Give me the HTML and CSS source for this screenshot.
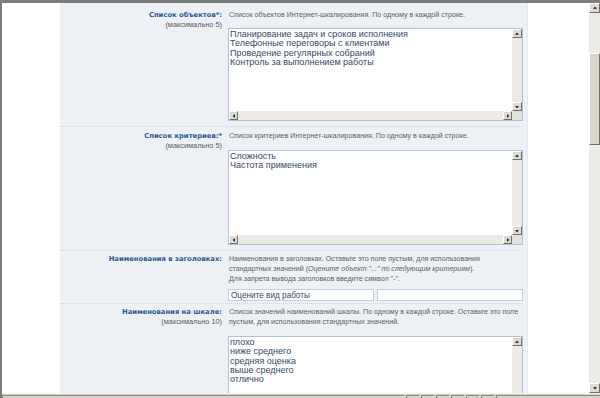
FILE: index.html
```html
<!DOCTYPE html>
<html lang="ru">

<head>
    <meta charset="UTF-8">
    <meta name="viewport" content="width=device-width, initial-scale=1.0">
    <title>Настройки шкалирования</title>
    <link rel="stylesheet" href="styles.css">
</head>

<body>
    <div class="window">
        <div class="viewport">
            <div class="page">
                <div class="gutter"></div>

                <form class="panel">
                    <div class="row">
                        <div class="label">
                            <b>Список объектов*:</b>
                            <span class="note">(максимально 5)</span>
                        </div>
                        <div class="field">
                            <p class="hint">Список объектов Интернет-шкалирования. По одному в каждой строке.</p>
                            <div class="box box-1">
                                <textarea>Планирование задач и сроков исполнения
Телефонные переговоры с клиентами
Проведение регулярных собраний
Контроль за выполнением работы</textarea>
                                <div class="vbar"><span class="btn up"></span><span class="track"></span><span class="btn down"></span></div>
                                <div class="hbar"><span class="btn left"></span><span class="track"></span><span class="btn right"></span></div>
                                <div class="corner"></div>
                            </div>
                        </div>
                    </div>

                    <div class="row">
                        <div class="label">
                            <b>Список критериев:*</b>
                            <span class="note">(максимально 5)</span>
                        </div>
                        <div class="field">
                            <p class="hint">Список критериев Интернет-шкалирования. По одному в каждой строке.</p>
                            <div class="box box-2">
                                <textarea>Сложность
Частота применения</textarea>
                                <div class="vbar"><span class="btn up"></span><span class="track"></span><span class="btn down"></span></div>
                                <div class="hbar"><span class="btn left"></span><span class="track"></span><span class="btn right"></span></div>
                                <div class="corner"></div>
                            </div>
                        </div>
                    </div>

                    <div class="row compact">
                        <div class="label">
                            <b>Наименования в заголовках:</b>
                        </div>
                        <div class="field">
                            <p class="hint hint-tight">Наименования в заголовках. Оставьте это поле пустым, для использования<br>
                                стандартных значений (<i>Оцените объект "..." по следующим критериям</i>).<br>
                                Для запрета вывода заголовков введите символ "-".</p>
                            <div class="inputs">
                                <input type="text" value="Оцените вид работы">
                                <input type="text" value="">
                            </div>
                        </div>
                    </div>

                    <div class="row compact last">
                        <div class="label">
                            <b>Наименования на шкале:</b>
                            <span class="note">(максимально 10)</span>
                        </div>
                        <div class="field">
                            <p class="hint">Список значений наименований шкалы. По одному в каждой строке. Оставьте это поле пустым, для использования стандартных значений.</p>
                            <div class="box box-3">
                                <textarea>плохо
ниже среднего
средняя оценка
выше среднего
отлично</textarea>
                                <div class="vbar"><span class="btn up"></span><span class="track"></span><span class="btn down"></span></div>
                            </div>
                        </div>
                    </div>
                </form>

                <div class="aside"></div>
            </div>

            <div class="scrollbar">
                <span class="btn up"></span>
                <span class="track"><span class="thumb"></span></span>
                <span class="btn down"></span>
            </div>
        </div>

        <div class="statusbar">
            <span class="pane wide"></span>
            <span class="pane"></span>
            <span class="pane"></span>
            <span class="pane"></span>
            <span class="pane"></span>
            <span class="pane"></span>
            <span class="pane"></span>
            <span class="pane rest"></span>
        </div>
    </div>
</body>

</html>
```

FILE: styles.css
```css
* {
    box-sizing: border-box;
}

body {
    margin: 0;
    font-family: "Liberation Sans", Arial, sans-serif;
    background-color: #fff;
}

.window {
    width: 600px;
    height: 398px;
    display: flex;
    flex-direction: column;
    border-top: 3px solid #7d7d7d;
    border-left: 2px solid #7d7d7d;
    overflow: hidden;
}

.viewport {
    flex: 1;
    display: flex;
    min-height: 0;
}

.page {
    flex: 1;
    display: flex;
    overflow: hidden;
}

.gutter {
    width: 58px;
    flex: none;
}

.aside {
    flex: 1;
}

/* form panel */
.panel {
    width: 468px;
    flex: none;
    margin: 0;
    padding: 3px 5px 0 0;
    background-color: #edf0f5;
    border-right: 1px solid #e3e9f4;
}

.row {
    display: grid;
    grid-template-columns: 162px 295px;
    column-gap: 6px;
    padding: 4px 0 5px;
    border-bottom: 1px dotted #cfd6e2;
}

.row.compact {
    padding: 3px 0 2px;
}

.row.last {
    border-bottom: none;
}

.label {
    display: flex;
    flex-direction: column;
    align-items: flex-end;
    text-align: right;
    font-size: 7.35px;
    line-height: 10px;
}

.label b {
    color: #2b5a92;
    font-family: "DejaVu Sans", Verdana, sans-serif;
    font-size: 6.8px;
}

.note {
    color: #5c5c5c;
}

.field {
    min-width: 0;
}

.hint {
    margin: 0 0 8px 1px;
    font-size: 7.1px;
    line-height: 10px;
    color: #616161;
}

.row + .row .hint {
    margin-bottom: 9px;
}

.row.compact .hint-tight {
    margin-bottom: 5px;
}

/* textarea with classic scrollbars */
.box {
    display: grid;
    grid-template-columns: 1fr 10px;
    grid-template-rows: 1fr 9px;
    border: 1px solid #b4c0d4;
    background-color: #fff;
}

.box-1 {
    height: 93px;
}

.box-2 {
    height: 95px;
}

.box-3 {
    height: 70px;
    grid-template-rows: 1fr;
    border-bottom: none;
}

.box textarea {
    border: none;
    padding: 1px 1px;
    resize: none;
    overflow: hidden;
    font-family: "Liberation Sans", Arial, sans-serif;
    font-size: 9px;
    line-height: 9.3px;
    color: #374766;
    outline: none;
}

.vbar,
.hbar {
    display: flex;
    background-color: #eceae4;
}

.vbar {
    flex-direction: column;
}

.track {
    flex: 1;
}

.corner {
    background-color: #e4e1da;
}

.btn {
    position: relative;
    flex: none;
    width: 9px;
    height: 9px;
    background-color: #dedad2;
    border-top: 1px solid #fff;
    border-left: 1px solid #fff;
    border-right: 1px solid #6f6f6f;
    border-bottom: 1px solid #6f6f6f;
}

.vbar .btn {
    width: 10px;
}

.btn::before {
    content: "";
    position: absolute;
    left: 50%;
    top: 50%;
    width: 0;
    height: 0;
    border: 2px solid transparent;
}

.btn.up::before {
    border-bottom: 2px solid #111;
    border-top: none;
    transform: translate(-50%, -60%);
}

.btn.down::before {
    border-top: 2px solid #111;
    border-bottom: none;
    transform: translate(-50%, -40%);
}

.btn.left::before {
    border-right: 2px solid #111;
    border-left: none;
    transform: translate(-60%, -50%);
}

.btn.right::before {
    border-left: 2px solid #111;
    border-right: none;
    transform: translate(-40%, -50%);
}

.inputs {
    display: flex;
    gap: 3px;
}

.inputs input {
    flex: 1;
    min-width: 0;
    height: 12px;
    padding: 0 2px;
    border: 1px solid #c5cfdf;
    font-family: "Liberation Sans", Arial, sans-serif;
    font-size: 8.2px;
    color: #374766;
}

/* window scrollbar */
.scrollbar {
    width: 11px;
    flex: none;
    display: flex;
    flex-direction: column;
    background-color: #edebe5;
}

.scrollbar .btn {
    width: 11px;
    height: 10px;
}

.scrollbar .track {
    display: flex;
    flex-direction: column;
}

.thumb {
    margin-top: 40px;
    height: 92px;
    background-color: #d9d3c9;
    border-top: 1px solid #fff;
    border-left: 1px solid #fff;
    border-right: 1px solid #6f6f6f;
    border-bottom: 1px solid #6f6f6f;
}

/* status bar */
.statusbar {
    height: 5px;
    flex: none;
    display: flex;
    gap: 2px;
    padding-top: 1px;
    background-color: #d6d3cb;
    border-top: 1px solid #f4f3ef;
}

.pane {
    width: 13px;
    border-top: 1px solid #8d8a83;
    border-left: 1px solid #8d8a83;
}

.pane.wide {
    width: 402px;
}

.pane.rest {
    flex: 1;
}
```
